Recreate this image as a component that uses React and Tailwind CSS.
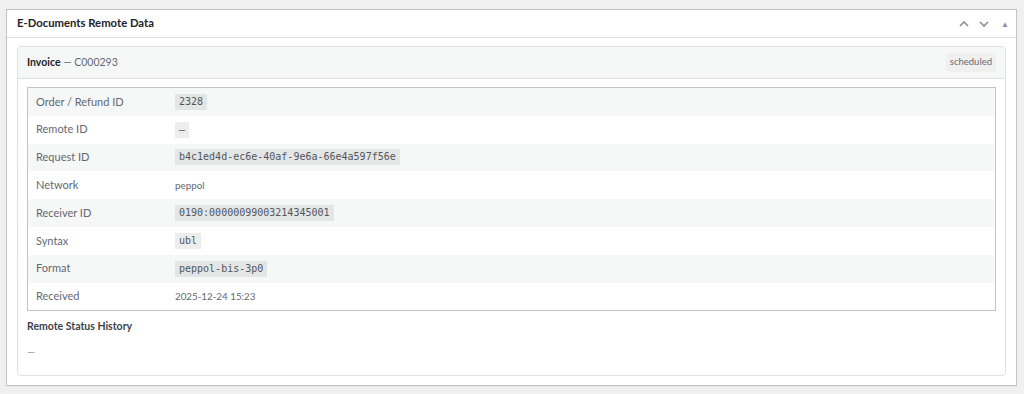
import React from 'react';

const rows = [
  { label: 'Order / Refund ID', value: '2328', code: true },
  { label: 'Remote ID', value: '–', code: true },
  { label: 'Request ID', value: 'b4c1ed4d-ec6e-40af-9e6a-66e4a597f56e', code: true },
  { label: 'Network', value: 'peppol' },
  { label: 'Receiver ID', value: '0190:00000099003214345001', code: true },
  { label: 'Syntax', value: 'ubl', code: true },
  { label: 'Format', value: 'peppol-bis-3p0', code: true },
  { label: 'Received', value: '2025-12-24 15:23' },
];

const Chevron = ({ up }) => (
  <svg width="12" height="12" viewBox="0 0 12 12" fill="none" stroke="currentColor" strokeWidth="1.6">
    {up ? <path d="M2 8l4-4 4 4" /> : <path d="M2 4l4 4 4-4" />}
  </svg>
);

export default function App() {
  return (
    <div className="min-h-screen bg-[#f0f0f1] pt-[9px] pl-[6px] pr-[7px] pb-[8px] font-['Lato',sans-serif] text-[#1d2327]">
      <div className="border border-[#c3c4c7] bg-white shadow-[0_1px_1px_rgba(0,0,0,0.04)]">
        {/* Header */}
        <div className="h-[28px] flex items-center justify-between pl-[10px] pr-[7px] border-b border-[#dcdcde]">
          <h2 className="text-[11.3px] font-bold text-[#1d2327]">E-Documents Remote Data</h2>
          <div className="flex items-center gap-[8px] text-[#8c8f94]">
            <Chevron up />
            <Chevron />
            <span className="text-[8px] ml-[3px]">▲</span>
          </div>
        </div>

        {/* Body */}
        <div className="pt-[8px] px-[10px] pb-[9px]">
          <div className="rounded-[4px] border border-[#e0e0e0] overflow-hidden">
            <div className="h-[32px] bg-[#f6f7f7] border-b border-[#e0e0e0] flex items-center justify-between px-[9px]">
              <div className="text-[10.5px] text-[#646970]">
                <span className="font-bold text-[#1d2327]">Invoice</span> — C000293
              </div>
              <span className="text-[9.5px] bg-[#f0f0f1] text-[#646970] rounded-[3px] px-[4px] py-[2px]">scheduled</span>
            </div>
            <div className="px-[9px] pt-[8px] pb-[16px]">
              <div className="border border-[#c3c4c7]">
                {rows.map((r, i) => (
                  <div key={r.label} className={`h-[27.8px] flex items-center ${i % 2 === 0 ? 'bg-[#f6f7f7]' : 'bg-white'}`}>
                    <div className="w-[147px] pl-[8px] text-[11px] text-[#646970]">{r.label}</div>
                    {r.code ? (
                      <code className="bg-[rgba(0,0,0,0.07)] px-[4px] py-[2px] text-[10px] leading-[12px] text-[#50575e] font-['DejaVu_Sans_Mono',monospace]">{r.value}</code>
                    ) : (
                      <span className="text-[9.8px] text-[#646970]">{r.value}</span>
                    )}
                  </div>
                ))}
              </div>
              <h4 className="mt-[8px] text-[10.5px] font-bold text-[#3c434a]">Remote Status History</h4>
              <p className="mt-[9px] text-[10px] text-[#8c8f94]">—</p>
            </div>
          </div>
        </div>
      </div>
    </div>
  );
}
